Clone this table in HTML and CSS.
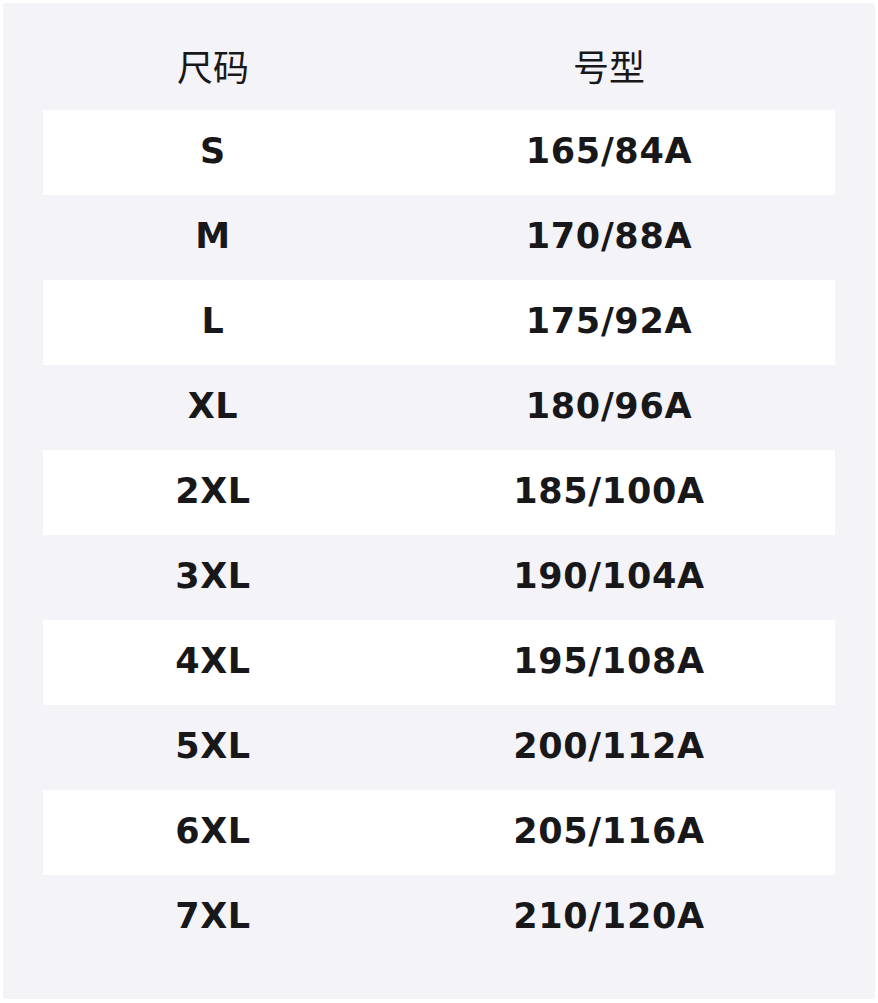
FILE: index.html
```html
<!DOCTYPE html>
<html lang="zh">
<head>
<meta charset="utf-8">
<link rel="stylesheet" href="styles.css">
</head>
<body>
<div class="panel">
  <table class="size-table">
    <thead>
      <tr><th class="c1">尺码</th><th class="c2">号型</th></tr>
    </thead>
    <tbody>
      <tr><td>S</td><td>165/84A</td></tr>
      <tr><td>M</td><td>170/88A</td></tr>
      <tr><td>L</td><td>175/92A</td></tr>
      <tr><td>XL</td><td>180/96A</td></tr>
      <tr><td>2XL</td><td>185/100A</td></tr>
      <tr><td>3XL</td><td>190/104A</td></tr>
      <tr><td>4XL</td><td>195/108A</td></tr>
      <tr><td>5XL</td><td>200/112A</td></tr>
      <tr><td>6XL</td><td>205/116A</td></tr>
      <tr><td>7XL</td><td>210/120A</td></tr>
    </tbody>
  </table>
</div>
</body>
</html>
```

FILE: styles.css
```css
html, body {
  margin: 0;
  padding: 0;
  background: #ffffff;
}
body {
  padding: 3px 3px 4px 3px;
  width: 878px;
  height: 1003px;
  box-sizing: border-box;
}
.panel {
  background: #f4f3f8;
  height: 996px;
  box-sizing: border-box;
  padding: 20px 40px 40px 40px;
  border-radius: 3px;
}
.size-table {
  width: 792px;
  border-collapse: collapse;
  table-layout: fixed;
  color: #18181a;
}
.size-table th {
  height: 83px;
  padding: 0 0 4px 0;
  font-family: "Noto Sans CJK SC", "DejaVu Sans", sans-serif;
  font-weight: 400;
  font-size: 36px;
  text-align: center;
  vertical-align: middle;
}
.size-table .c1 { width: 340px; }
.size-table .c2 { width: 452px; }
.size-table td {
  height: 82px;
  padding: 0 0 3px 0;
  font-family: "DejaVu Sans", "Verdana", sans-serif;
  font-weight: 700;
  font-size: 35px;
  letter-spacing: 0.7px;
  text-align: center;
  vertical-align: middle;
}
.size-table tbody tr:nth-child(odd) td {
  background: #ffffff;
}
```
